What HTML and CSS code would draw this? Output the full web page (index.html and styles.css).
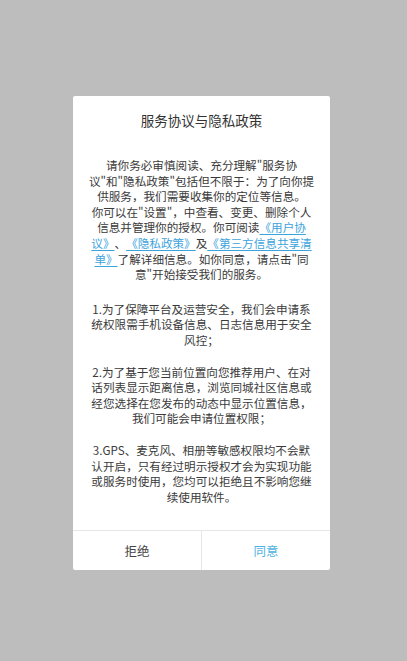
FILE: index.html
```html
<!DOCTYPE html>
<html lang="zh-CN">
<head>
<meta charset="utf-8">
<title>服务协议与隐私政策</title>
<link rel="stylesheet" href="styles.css">
</head>
<body>
<div class="screen">
  <div class="dialog">
    <div class="title">服务协议与隐私政策</div>
    <div class="content">
      <p class="para first">请你务必审慎阅读、充分理解"服务协<br>议"和"隐私政策"包括但不限于：为了向你提<br>供服务，我们需要收集你的定位等信息。<br>你可以在"设置"，中查看、变更、删除个人<br>信息并管理你的授权。你可阅读<a class="link">《用户协<br>议》</a>、<a class="link">《隐私政策》</a>及<a class="link">《第三方信息共享清<br>单》</a>了解详细信息。如你同意，请点击"同<br>意"开始接受我们的服务。</p>
      <p class="para second">1.为了保障平台及运营安全，我们会申请系<br>统权限需手机设备信息、日志信息用于安全<br>风控；</p>
      <p class="para">2.为了基于您当前位置向您推荐用户、在对<br>话列表显示距离信息，浏览同城社区信息或<br>经您选择在您发布的动态中显示位置信息，<br>我们可能会申请位置权限；</p>
      <p class="para last">3.GPS、麦克风、相册等敏感权限均不会默<br>认开启，只有经过明示授权才会为实现功能<br>或服务时使用，您均可以拒绝且不影响您继<br>续使用软件。</p>
    </div>
    <div class="actions">
      <div class="btn refuse">拒绝</div>
      <div class="btn agree">同意</div>
    </div>
  </div>
</div>
</body>
</html>
```
FILE: styles.css
```css
html, body {
  margin: 0;
  padding: 0;
  background: #bdbdbd;
}
.screen {
  width: 407px;
  height: 661px;
  background: #bdbdbd;
  padding-top: 96px;
  box-sizing: border-box;
  font-family: "Noto Sans CJK SC", "Noto Sans", sans-serif;
}
.dialog {
  margin-left: 73px;
  width: 257px;
  background: #ffffff;
  border-radius: 2px;
  display: flex;
  flex-direction: column;
}
.title {
  padding-top: 14px;
  height: 20px;
  line-height: 20px;
  font-size: 13.5px;
  color: #333333;
  text-align: center;
}
.content {
  padding: 28px 0 25px;
  text-align: center;
}
.para {
  margin: 0 0 16px;
  font-size: 11.6px;
  line-height: 15.6px;
  color: #3a3a3a;
  white-space: nowrap;
  text-spacing-trim: space-all;
}
.para.first {
  margin-bottom: 19px;
}
.para.last {
  margin-bottom: 0;
}
.link {
  color: #3da3dc;
  text-decoration: underline;
  text-underline-offset: 2px;
}
.actions {
  display: flex;
  border-top: 1px solid #e6e6e6;
  height: 39px;
}
.btn {
  flex: 1;
  display: flex;
  align-items: center;
  justify-content: center;
  font-size: 12.5px;
}
.refuse {
  color: #444444;
  border-right: 1px solid #e6e6e6;
}
.agree {
  color: #4fb3e3;
}
```
